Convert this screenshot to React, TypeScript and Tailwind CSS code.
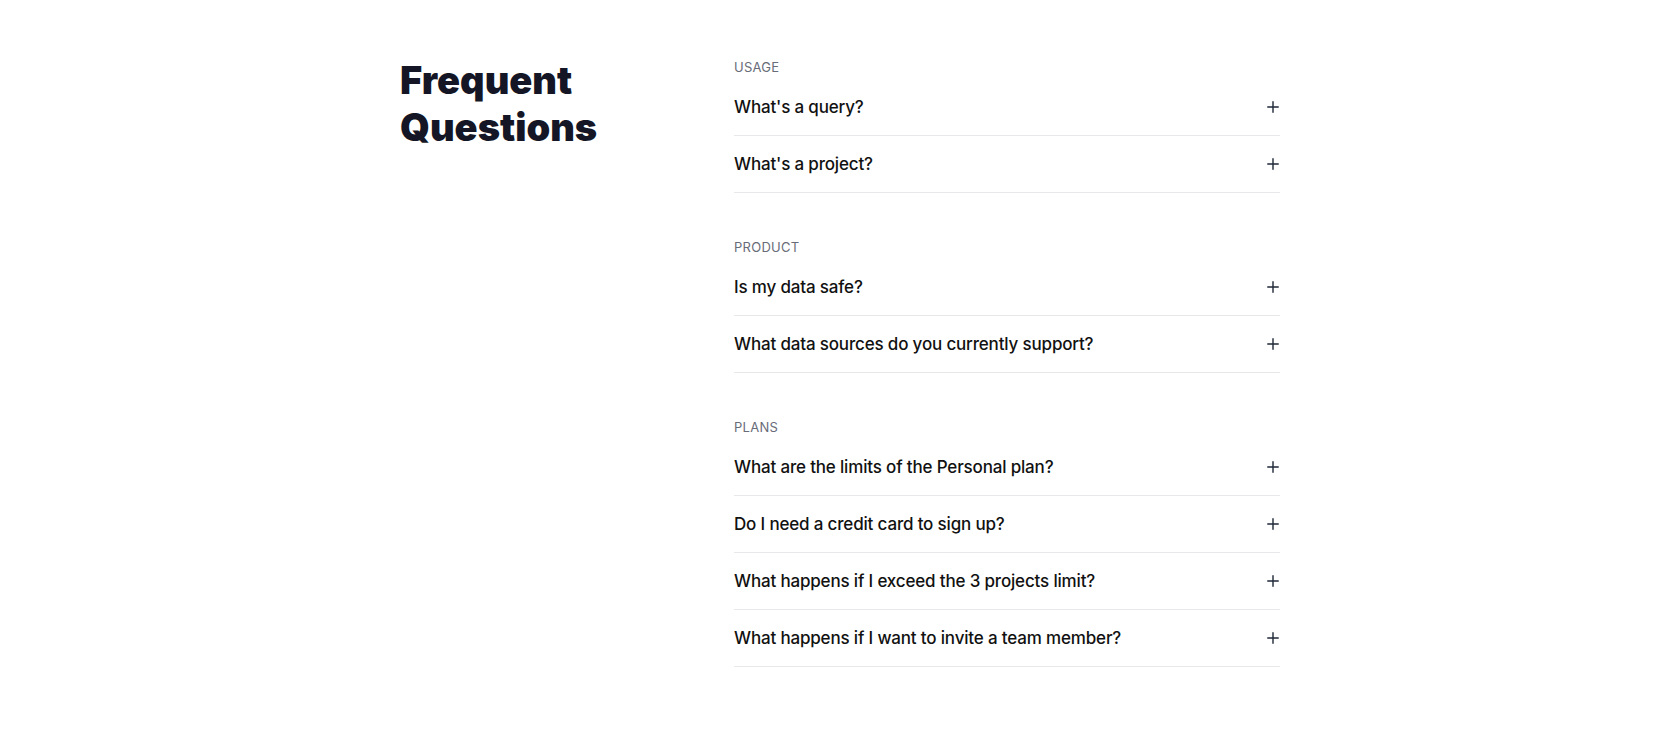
const sections = [
  {
    label: "Usage",
    items: ["What's a query?", "What's a project?"],
  },
  {
    label: "Product",
    items: ["Is my data safe?", "What data sources do you currently support?"],
  },
  {
    label: "Plans",
    items: [
      "What are the limits of the Personal plan?",
      "Do I need a credit card to sign up?",
      "What happens if I exceed the 3 projects limit?",
      "What happens if I want to invite a team member?",
    ],
  },
];

function PlusIcon() {
  return (
    <svg
      width="12"
      height="12"
      viewBox="0 0 12 12"
      fill="none"
      stroke="#1f2937"
      strokeWidth="1.4"
      strokeLinecap="round"
      className="mr-px shrink-0"
    >
      <path d="M6 0.75v10.5M0.75 6h10.5" />
    </svg>
  );
}

export default function App() {
  return (
    <div
      className="min-h-screen bg-white pt-[57px] pb-16"
      style={{ fontFamily: "Inter, 'Noto Sans', sans-serif" }}
    >
      <div className="mx-auto grid w-[880px] grid-cols-[334px_1fr]">
        <h2 className="text-[38px] leading-[47px] font-black text-[#141625]">
          Frequent
          <br />
          Questions
        </h2>

        <div className="flex flex-col gap-11">
          {sections.map((section) => (
            <div key={section.label}>
              <p className="mb-0.5 text-[13px] leading-5 tracking-[0.02em] uppercase text-[#686c78]">
                {section.label}
              </p>
              {section.items.map((q) => (
                <button
                  key={q}
                  className="flex w-full items-center justify-between border-b border-[#e8e8ea] py-[14px] text-left"
                >
                  <span className="text-[17px] leading-7 font-medium tracking-[-0.01em] text-[#111111]">
                    {q}
                  </span>
                  <PlusIcon />
                </button>
              ))}
            </div>
          ))}
        </div>
      </div>
    </div>
  );
}
